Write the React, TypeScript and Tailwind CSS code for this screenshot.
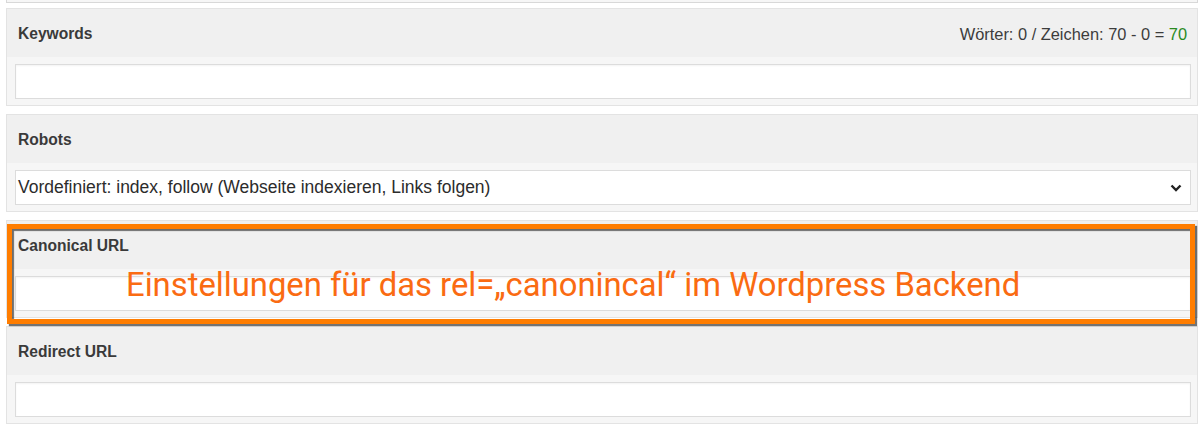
const Section = (props: { label: string; right?: React.ReactNode; children: React.ReactNode }) => {
  const { label, right, children } = props;
  return (
    <div className="ml-[6px] mr-[2px] border border-[#e3e3e3] bg-[#f6f6f6]">
      <div className="h-[48px] bg-[#f0f0f0] flex items-center justify-between pl-[11px] pr-[10px] pt-[2px]">
        <span className="font-bold text-[15.6px] text-[#3a3a3a]">{label}</span>
        {right}
      </div>
      <div className="pt-[7px] pb-[6px] pl-[8px] pr-[6px]">{children}</div>
    </div>
  );
};

const TextBox = () => (
  <div className="h-[35px] bg-white border border-[#dcdcdc] shadow-[inset_0_1px_2px_rgba(0,0,0,0.05)]" />
);

export default function App() {
  return (
    <div
      className="relative w-[1200px] h-[439px] bg-white overflow-hidden"
      style={{ fontFamily: '"Liberation Sans", Arial, sans-serif' }}
    >
      {/* tail of the section above */}
      <div className="ml-[6px] mr-[2px] h-[3px] border-x border-b border-[#d8d8d8] bg-[#f6f6f6]" />

      <div className="flex flex-col gap-[8px] pt-[5px]">
        <Section
          label="Keywords"
          right={
            <span className="text-[16.4px] text-[#3c3c3c]">
              Wörter: 0 / Zeichen: 70 - 0 = <span className="text-[#2a8a1f]">70</span>
            </span>
          }
        >
          <TextBox />
        </Section>

        <Section label="Robots">
          <div className="h-[35px] bg-white border border-[#dcdcdc] flex items-center justify-between pl-[2px] pr-[8px]">
            <span className="text-[17.5px] text-[#2c2c2c]">
              Vordefiniert: index, follow (Webseite indexieren, Links folgen)
            </span>
            <svg width="12" height="8" viewBox="0 0 12 8">
              <path d="M1.5 1.5 L6 6 L10.5 1.5" fill="none" stroke="#222" strokeWidth="2.4" />
            </svg>
          </div>
        </Section>

        <Section label="Canonical URL">
          <TextBox />
        </Section>

        <Section label="Redirect URL">
          <TextBox />
        </Section>
      </div>

      {/* annotation overlay */}
      <div className="absolute left-[7px] top-[224px] w-[1188px] h-[100px] border-[5px] border-[#ff7d00] shadow-[2px_2px_1px_rgba(0,0,0,0.55),inset_2px_2px_1px_rgba(0,0,0,0.55)]" />
      <div
        className="absolute left-[126px] top-[264px] text-[32.8px] leading-[42px] text-[#fa6b12]"
        style={{ fontFamily: "Roboto, sans-serif" }}
      >
        Einstellungen für das rel=„canonincal“ im Wordpress Backend
      </div>
    </div>
  );
}
